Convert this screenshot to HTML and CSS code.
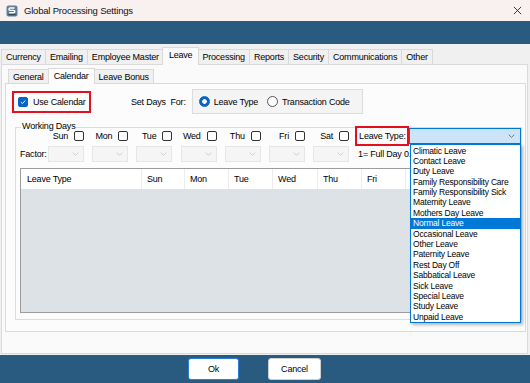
FILE: index.html
```html
<!DOCTYPE html>
<html>
<head>
<meta charset="utf-8">
<title>Global Processing Settings</title>
<link rel="stylesheet" href="styles.css">
</head>
<body>
<div class="titlebar">
  <svg class="appicon" viewBox="0 0 12 12">
    <rect x="0.5" y="0.5" width="11" height="11" rx="2" fill="#5f7f9b"/>
    <path d="M2.5 9.5h7" stroke="#2f4a60" stroke-width="1.6"/>
    <path d="M8.5 3H4.2a1.2 1.2 0 0 0 0 2.4h3.4a1.2 1.2 0 0 1 0 2.4H3.2" fill="none" stroke="#fff" stroke-width="1.4"/>
  </svg>
  <span class="title">Global Processing Settings</span>
  <svg class="close" viewBox="0 0 10 10"><path d="M1 1L9 9M9 1L1 9" stroke="#222" stroke-width="1"/></svg>
</div>
<div class="band"></div>
<div class="main">
  <div class="tabs">
    <div class="tab">Currency</div>
    <div class="tab">Emailing</div>
    <div class="tab">Employee Master</div>
    <div class="tab sel">Leave</div>
    <div class="tab">Processing</div>
    <div class="tab">Reports</div>
    <div class="tab">Security</div>
    <div class="tab">Communications</div>
    <div class="tab">Other</div>
  </div>
  <div class="panel">
    <div class="subtabs">
      <div class="stab">General</div>
      <div class="stab sel">Calendar</div>
      <div class="stab">Leave Bonus</div>
    </div>
    <div class="subpanel">
      <div class="toprow">
        <label class="usecal hl">
          <span class="cb checked"><svg viewBox="0 0 10 10"><path d="M2.4 5.2L4.3 7L7.8 3.2" fill="none" stroke="#fff" stroke-width="1.2"/></svg></span>
          <span>Use Calendar</span>
        </label>
        <span class="setdays">Set Days&nbsp;&nbsp;For:</span>
        <div class="radiogroup">
          <span class="radio on"></span><span class="rlabel">Leave Type</span>
          <span class="radio second"></span><span class="rlabel">Transaction Code</span>
        </div>
      </div>
      <div class="groupbox">
        <div class="gb-title">Working Days</div>
        <div class="dayrow">
          <div class="lead"></div>
          <div class="day"><span>Sun</span><span class="cb"></span></div>
          <div class="day"><span>Mon</span><span class="cb"></span></div>
          <div class="day"><span>Tue</span><span class="cb"></span></div>
          <div class="day"><span>Wed</span><span class="cb"></span></div>
          <div class="day"><span>Thu</span><span class="cb"></span></div>
          <div class="day"><span>Fri</span><span class="cb"></span></div>
          <div class="day"><span>Sat</span><span class="cb"></span></div>
          <div class="lt">
            <span class="lt-label hl">Leave Type:</span>
            <div class="combo active">
              <svg class="chev" viewBox="0 0 8 5"><path d="M0.5 0.8L4 4.2L7.5 0.8" fill="none" stroke="#5a5a5a" stroke-width="1"/></svg>
              <ul class="droplist">
                <li>Climatic Leave</li>
                <li>Contact Leave</li>
                <li>Duty Leave</li>
                <li>Family Responsibility Care</li>
                <li>Family Responsibility Sick</li>
                <li>Maternity Leave</li>
                <li>Mothers Day Leave</li>
                <li class="on">Normal Leave</li>
                <li>Occasional Leave</li>
                <li>Other Leave</li>
                <li>Paternity Leave</li>
                <li>Rest Day Off</li>
                <li>Sabbatical Leave</li>
                <li>Sick Leave</li>
                <li>Special Leave</li>
                <li>Study Leave</li>
                <li>Unpaid Leave</li>
              </ul>
            </div>
          </div>
        </div>
        <div class="factorrow">
          <div class="lead">Factor:</div>
          <div class="day"><span class="fcombo"><svg class="chev" viewBox="0 0 8 5"><path d="M0.5 0.8L4 4.2L7.5 0.8" fill="none" stroke="#c4c4c4" stroke-width="1"/></svg></span></div>
          <div class="day"><span class="fcombo"><svg class="chev" viewBox="0 0 8 5"><path d="M0.5 0.8L4 4.2L7.5 0.8" fill="none" stroke="#c4c4c4" stroke-width="1"/></svg></span></div>
          <div class="day"><span class="fcombo"><svg class="chev" viewBox="0 0 8 5"><path d="M0.5 0.8L4 4.2L7.5 0.8" fill="none" stroke="#c4c4c4" stroke-width="1"/></svg></span></div>
          <div class="day"><span class="fcombo"><svg class="chev" viewBox="0 0 8 5"><path d="M0.5 0.8L4 4.2L7.5 0.8" fill="none" stroke="#c4c4c4" stroke-width="1"/></svg></span></div>
          <div class="day"><span class="fcombo"><svg class="chev" viewBox="0 0 8 5"><path d="M0.5 0.8L4 4.2L7.5 0.8" fill="none" stroke="#c4c4c4" stroke-width="1"/></svg></span></div>
          <div class="day"><span class="fcombo"><svg class="chev" viewBox="0 0 8 5"><path d="M0.5 0.8L4 4.2L7.5 0.8" fill="none" stroke="#c4c4c4" stroke-width="1"/></svg></span></div>
          <div class="day"><span class="fcombo"><svg class="chev" viewBox="0 0 8 5"><path d="M0.5 0.8L4 4.2L7.5 0.8" fill="none" stroke="#c4c4c4" stroke-width="1"/></svg></span></div>
          <div class="note"><span class="note-text">1= Full Day 0.5</span></div>
        </div>
        <div class="grid">
          <div class="ghead">
            <div class="gc c-type">Leave Type</div>
            <div class="gc c-43">Sun</div>
            <div class="gc c-44">Mon</div>
            <div class="gc c-44">Tue</div>
            <div class="gc c-45">Wed</div>
            <div class="gc c-44">Thu</div>
            <div class="gc c-44">Fri</div>
            <div class="gc c-44"></div>
          </div>
          <div class="gbody"></div>
        </div>
      </div>
    </div>
  </div>
</div>
<div class="footer">
  <button class="btn ok">Ok</button>
  <button class="btn cancel">Cancel</button>
</div>
</body>
</html>
```
FILE: styles.css
```css
* { box-sizing: border-box; margin: 0; padding: 0; }
html, body { width: 530px; height: 383px; overflow: hidden; }
body {
  font-family: "Liberation Sans", Arial, sans-serif;
  font-size: 9px;
  letter-spacing: -0.2px;
  color: #000;
  background: #f0f0f0;
}

/* title bar */
.titlebar {
  height: 21px;
  background: #f9f1ef;
  display: flex;
  align-items: center;
  padding: 0 8px 0 6px;
}
.appicon { width: 12px; height: 12px; flex: none; }
.title { margin-left: 6px; font-size: 9.5px; flex: 1; color: #111; }
.close { width: 9px; height: 9px; flex: none; }

.band { height: 23px; background: #295a7f; }

/* main area */
.main {
  height: 311px;
  padding: 3px 2px 0 1px;
}
.tabs {
  display: flex;
  height: 18px;
  margin-bottom: -1px;
}
.tab {
  align-self: flex-start;
  margin-top: 2px;
  height: 15px;
  line-height: 14px;
  padding: 0 4px;
  border: 1px solid #d9d9d9;
  border-bottom: none;
  background: #f0f0f0;
  margin-right: -1px;
  white-space: nowrap;
}
.tab.sel {
  margin-top: 0;
  height: 18px;
  line-height: 14px;
  background: #fafafa;
  margin-left: -1px;
  margin-right: -2px;
  padding: 0 6px;
  position: relative;
  z-index: 2;
}
.panel {
  height: 290px;
  background: #fafafa;
  border: 1px solid #dadada;
  padding: 3px 1px 0 3px;
}

.subtabs {
  display: flex;
  height: 16px;
  margin-left: 3px;
  margin-bottom: -1px;
}
.stab {
  align-self: flex-start;
  margin-top: 1px;
  height: 14px;
  line-height: 14px;
  padding: 0 4px;
  border: 1px solid #dadada;
  border-bottom: none;
  background: #f0f0f0;
  margin-right: -1px;
  white-space: nowrap;
}
.stab.sel {
  margin-top: 0;
  height: 16px;
  line-height: 14px;
  background: #fdfdfd;
  padding: 0 5px;
  position: relative;
  z-index: 2;
}
.subpanel {
  background: #fcfcfc;
  border: 1px solid #dadada;
  padding-top: 5px;
}

/* top row */
.toprow {
  display: flex;
  align-items: center;
  height: 25px;
  padding-left: 6px;
}
.hl { border: 2px solid #e5101f; }
.usecal {
  display: flex;
  align-items: center;
  height: 22px;
  padding: 0 5px 0 4px;
  gap: 5px;
  width: 79px;
  white-space: nowrap;
}
.cb {
  display: block;
  width: 10px;
  height: 10px;
  border: 1px solid #333;
  border-radius: 2px;
  background: #fff;
  flex: none;
}
.cb.checked {
  background: #0a64c4;
  border-color: #0a64c4;
}
.cb.checked svg { display: block; width: 8px; height: 8px; }
.setdays { margin-left: 40px; white-space: nowrap; }
.radiogroup {
  margin-left: 6px;
  height: 25px;
  width: 171px;
  border: 1px solid #dcdcdc;
  background: #f4f4f4;
  display: flex;
  align-items: center;
  padding-left: 6px;
  white-space: nowrap;
}
.radio {
  width: 11px;
  height: 11px;
  border-radius: 50%;
  border: 1px solid #555;
  background: #fff;
  flex: none;
}
.radio.on {
  border-color: #0a64c4;
  background: radial-gradient(circle, #fff 0 2px, #0a64c4 2.6px);
}
.radio.second { margin-left: 9px; }
.rlabel { margin-left: 4px; }

/* working days group */
.groupbox {
  margin: 13px 3px 11px 9px;
  border: 1px solid #dcdcdc;
  padding-bottom: 6px;
}
.gb-title {
  margin: -7px 0 0 5px;
  width: max-content;
  line-height: 10px;
  padding: 0 1px;
  background: #fcfcfc;
}
.dayrow, .factorrow {
  display: grid;
  grid-template-columns: 24px repeat(7, 44.17px) 1fr;
  align-items: center;
}
.dayrow { margin-top: -5px; height: 20px; }
.factorrow { height: 16px; }
.day {
  display: flex;
  justify-content: flex-end;
  align-items: center;
  gap: 6px;
}
.lead { white-space: nowrap; padding-left: 4px; }
.lt {
  display: flex;
  align-items: center;
  margin-left: 6px;
}
.lt-label {
  width: 54px;
  height: 20px;
  line-height: 16px;
  padding-left: 2px;
  white-space: nowrap;
  flex: none;
}
.combo {
  position: relative;
  flex: 1;
  height: 16px;
  border: 1px solid #0078d7;
  background: #cce4f7;
}
.combo .chev {
  position: absolute;
  right: 5px;
  top: 5px;
  width: 7px;
  height: 4px;
}
.fcombo {
  position: relative;
  display: block;
  width: 36px;
  height: 16px;
  border: 1px solid #e6e6e6;
  background: #f5f5f5;
}
.fcombo .chev {
  position: absolute;
  right: 4px;
  top: 5px;
  width: 7px;
  height: 4px;
}
.note {
  padding-left: 9px;
  white-space: nowrap;
}
.note-text {
  display: block;
  width: 52px;
  overflow: hidden;
}

/* dropdown list */
.droplist {
  position: absolute;
  top: calc(100% + 1px);
  left: 0;
  right: -1px;
  list-style: none;
  background: #fff;
  border: 1px solid #0078d7;
  box-shadow: 2px 2px 3px rgba(0, 0, 0, 0.28);
  z-index: 5;
  font-size: 8.5px;
  padding-top: 0.5px;
}
.droplist li {
  height: 10.4px;
  line-height: 10.4px;
  padding-left: 2px;
  white-space: nowrap;
}
.droplist li.on { background: #0078d7; color: #fff; }

/* grid */
.grid {
  margin: 6px 4px 0 4px;
  height: 145px;
  border: 1px solid #9c9c9c;
  display: flex;
  flex-direction: column;
}
.ghead {
  display: flex;
  height: 20px;
  background: #fff;
  flex: none;
}
.gc {
  line-height: 20px;
  padding-left: 5px;
  border-right: 1px solid #ececec;
  white-space: nowrap;
  flex: none;
}
.c-type { width: 121px; padding-left: 6px; }
.c-43 { width: 43px; }
.c-44 { width: 44px; }
.c-45 { width: 45px; }
.gbody { flex: 1; background: #dde2e6; }

/* footer */
.footer {
  height: 28px;
  background: #295a7f;
  display: flex;
  align-items: center;
  gap: 29px;
  padding-left: 188px;
}
.btn {
  font-family: inherit;
  font-size: 9px;
  letter-spacing: -0.2px;
  height: 22px;
  background: #fff;
  border: 1px solid #cfcfcf;
  border-radius: 3px;
  color: #000;
}
.btn.ok { width: 51px; border-color: #2b7fd6; }
.btn.cancel { width: 53px; }
```
